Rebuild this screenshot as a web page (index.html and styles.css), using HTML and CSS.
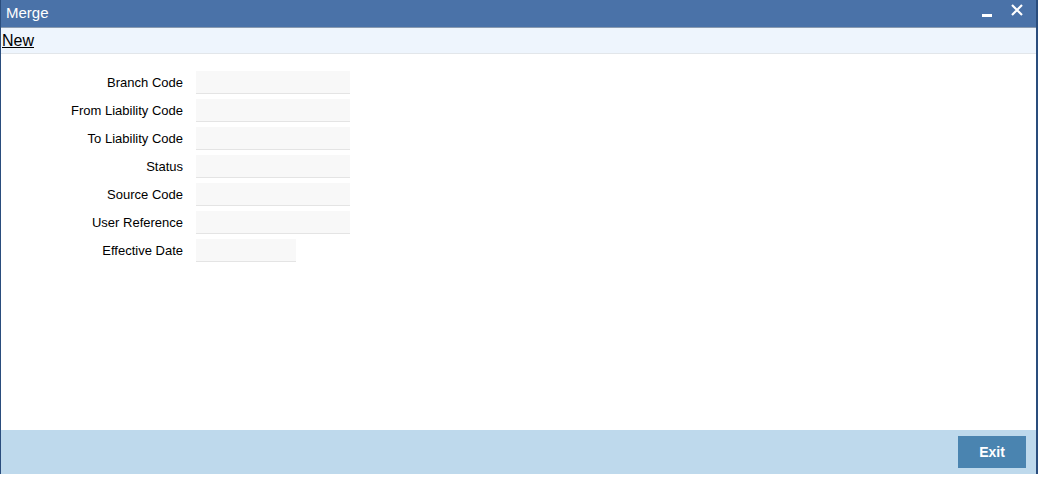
FILE: index.html
```html
<!DOCTYPE html>
<html>
<head>
<meta charset="utf-8">
<link rel="stylesheet" href="styles.css">
</head>
<body>
<div class="window">
  <div class="titlebar">
    <span class="title">Merge</span>
    <div class="controls">
      <svg class="min" width="12" height="12" viewBox="0 0 12 12"><rect x="1" y="7" width="10" height="3" fill="#fff"/></svg>
      <svg class="close" width="14" height="14" viewBox="0 0 14 14"><path d="M2 2 L12 12 M12 2 L2 12" stroke="#fff" stroke-width="2.2"/></svg>
    </div>
  </div>
  <div class="toolbar"><a class="new">New</a></div>
  <div class="content">
    <div class="form">
      <label>Branch Code</label><div class="input"></div>
      <label>From Liability Code</label><div class="input"></div>
      <label>To Liability Code</label><div class="input"></div>
      <label>Status</label><div class="input"></div>
      <label>Source Code</label><div class="input"></div>
      <label>User Reference</label><div class="input"></div>
      <label>Effective Date</label><div class="input short"></div>
    </div>
  </div>
  <div class="footer"><button class="exit">Exit</button></div>
</div>
</body>
</html>
```
FILE: styles.css
```css
html, body { margin: 0; padding: 0; background: #fff; }
body { font-family: "Liberation Sans", Arial, sans-serif; width: 1038px; height: 483px; }
.window {
  width: 1038px; height: 474px; box-sizing: border-box;
  border-left: 1px solid #2a4d7d; border-right: 2px solid #2a4d7d;
  display: flex; flex-direction: column;
}
.titlebar {
  height: 28px; background: #4a72a8; border-bottom: 1px solid #8a9bb0;
  display: flex; align-items: center; justify-content: space-between;
  box-sizing: border-box; padding: 0 12px 0 5px;
}
.title { color: #fff; font-size: 15px; position: relative; top: -1px; }
.controls { display: flex; align-items: center; gap: 17px; position: relative; top: -4px; }
.min { position: relative; top: 3px; }
.toolbar {
  height: 26px; background: #eef5fd; border-bottom: 1px solid #e2e6ea;
  box-sizing: border-box; display: flex; align-items: center; padding-left: 1px;
}
.new { font-size: 16px; color: #000; text-decoration: underline; }
.content { flex: 1; padding-top: 17px; }
.form {
  display: grid; grid-template-columns: 182px auto; column-gap: 13px; row-gap: 5px;
  align-items: center; justify-items: start;
}
.form label { justify-self: end; font-size: 13px; color: #000; }
.input { width: 154px; height: 23px; background: #f8f8f8; border-bottom: 1px solid #e4e4e4; box-sizing: border-box; }
.input.short { width: 100px; }
.footer {
  height: 44px; background: #bed9ec; display: flex; align-items: center; justify-content: flex-end;
  padding-right: 10px; box-sizing: border-box;
}
.exit {
  width: 68px; height: 32px; border: none; background: #4a84b0; color: #fff;
  font-family: "Liberation Sans", Arial, sans-serif; font-size: 14px; font-weight: bold;
}
```
